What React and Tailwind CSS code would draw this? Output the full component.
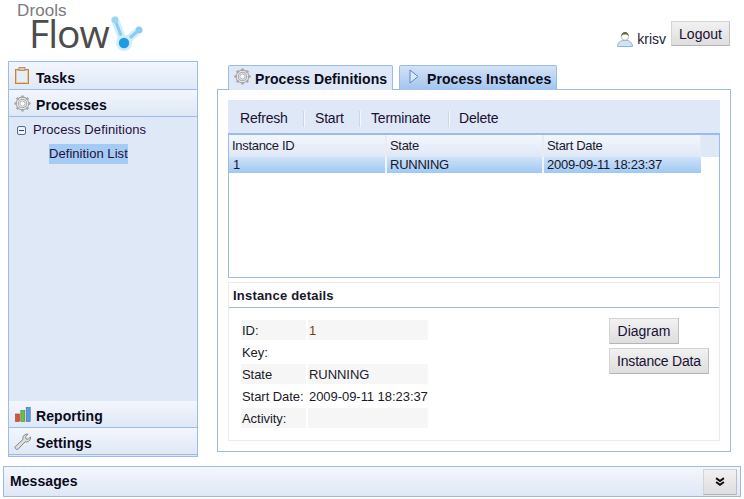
const Gear = ({ className }) => (
  <svg viewBox="0 0 20 20" className={className}>
    <circle cx="10" cy="10" r="6.3" fill="none" stroke="#a0a0a0" strokeWidth="3.6" />
    <circle cx="10" cy="10" r="6.3" fill="none" stroke="#e4e4e4" strokeWidth="1.8" />
    <g stroke="#a6a6a6" strokeWidth="3">
      <path d="M10 0.5v3M10 16.500v3M0.500 10h3M16.500 10h3M3.300 3.300l2.100 2.100M14.600 14.600l2.100 2.100M16.700 3.300l-2.100 2.100M5.400 14.600l-2.100 2.100" />
    </g>
    <circle cx="10" cy="10" r="3" fill="#fff" stroke="#aaa" strokeWidth="1" />
  </svg>
);

const Clipboard = () => (
  <svg viewBox="0 0 15 17" className="w-[15px] h-[17px]">
    <rect x="0.5" y="2.500" width="13" height="14" fill="#d9e8f7" stroke="#c08245" />
    <rect x="1.500" y="3.500" width="11" height="12" fill="#e3eefa" stroke="#edc79c" strokeWidth="1" />
    <rect x="4" y="0.5" width="6" height="3" fill="#e3c9a6" stroke="#a8865f" strokeWidth="0.8" />
  </svg>
);

const Bars = () => (
  <svg viewBox="0 0 16 15" className="w-[16px] h-[15px]">
    <rect x="0.5" y="7" width="4" height="7.500" fill="#e0503c" stroke="#9b3a2c" strokeWidth="0.6" />
    <rect x="5.800" y="3.500" width="4" height="11" fill="#6dbb4a" stroke="#3f8a2a" strokeWidth="0.6" />
    <rect x="11.200" y="0.5" width="4" height="14" fill="#5b9be0" stroke="#3a6ea8" strokeWidth="0.6" />
  </svg>
);

const Wrench = () => (
  <svg viewBox="0 0 17 17" className="w-[17px] h-[17px]">
    <path
      d="M1.200 13.600 9 6.400c-.6-2.200.6-4.600 3-5.200.8-.2 1.500-.1 2.100.1l-2.600 2.500.5 2 2 .5 2.500-2.400c.4 2.400-1 4.500-3.200 5-.8.2-1.500.1-2.200-.1l-7.300 7.600c-1 .8-3.400-1.400-2.600-2.800z"
      fill="#dedede"
      stroke="#7d7d7d"
      strokeWidth="0.9"
    />
  </svg>
);

const User = () => (
  <svg viewBox="0 0 16 16" className="w-[16px] h-[16px]">
    <path d="M.5 15.500c0-3.500 2.500-5.500 5-6h5c2.500.5 5 2.500 5 6z" fill="#cfe2f7" stroke="#8fb3dc" />
    <circle cx="8" cy="5.500" r="3.700" fill="#fff" stroke="#b89a78" strokeWidth="0.6" />
    <path d="M4.300 5.500C4.100 2.800 5.800 1 8 1s3.900 1.800 3.700 4.500C10.800 3.800 9.500 3.600 8 3.600s-2.800.2-3.700 1.900z" fill="#5f6b3c" />
  </svg>
);

const Logo = () => (
  <div className="relative w-[150px] h-[61px]">
    <span className="absolute left-[17px] top-[1px] text-[17px] leading-[19px] tracking-[0.1px] text-[#7b7b7b]">Drools</span>
    <span
      className="absolute left-[29px] top-[18px] text-[39px] leading-[30px] tracking-[-1px] text-[#4c4c4c]"
      style={{ fontFamily: '"Open Sans","Liberation Sans",sans-serif' }}
    >
      Flow
    </span>
    <svg viewBox="0 0 34 40" className="absolute left-[111px] top-[13px] w-[34px] h-[40px]">
      <path d="M4 7 13 30 28 17" fill="none" stroke="#d4eefb" strokeWidth="8" strokeLinecap="round" strokeLinejoin="round" />
      <path d="M4 7 13 30 28 17" fill="none" stroke="#86cdf1" strokeWidth="3" strokeLinecap="round" strokeLinejoin="round" />
      <circle cx="4" cy="7" r="3.200" fill="#9bd6f4" />
      <circle cx="28" cy="17" r="3.200" fill="#86cdf1" />
      <circle cx="13" cy="30" r="8" fill="#d2edfb" />
      <circle cx="13" cy="30" r="5.200" fill="#1d9be3" />
    </svg>
  </div>
);

const Btn = ({ children, className = "" }) => (
  <button className={`h-[26px] px-[8px] border border-[#d4d4d4] border-b-[#b4b4b4] border-r-[#c0c0c0] bg-gradient-to-b from-[#f1f1f1] to-[#dedede] text-[14px] text-[#1a1033] whitespace-nowrap ${className}`}>
    {children}
  </button>
);

const AccHead = ({ icon, label, pad, h = "h-[27px]" }) => (
  <div className={`${h} flex items-center gap-[5px] pl-[5px] bg-gradient-to-b from-[#f3f6fd] to-[#dfe8f6] border-b border-[#9dbbe8]`}>
    <span className="w-[17px] h-[18px] flex items-center justify-center shrink-0">{icon}</span>
    <span className={`text-[14px] font-bold tracking-[0.08px] text-[#0b0b1a] ${pad}`}>{label}</span>
  </div>
);

const DetailRow = ({ label, value, shaded }) => (
  <div className="flex gap-[2px] h-[20px] items-center text-[13px] leading-[21px] tracking-[-0.05px] text-[#1a1a2a]">
    <div className={`w-[65px] h-full pl-[1px] whitespace-nowrap ${shaded ? "bg-[#f6f6f6]" : ""}`}>{label}</div>
    <div className={`w-[120px] h-full pl-[1px] whitespace-nowrap ${shaded ? "bg-[#f6f6f6]" : ""}`}>{value}</div>
  </div>
);

const TB = ({ children, sep = true, className }) => (
  <div className="flex items-center">
    <span className={`text-[14px] tracking-[-0.2px] text-[#1a1033] ${className}`}>{children}</span>
    {sep && <span className="w-[2px] h-[16px] bg-[#cdd6e3] border-r border-[#f4f7fc]" />}
  </div>
);

export default function App() {
  return (
    <div className="w-[744px] h-[499px] bg-white flex flex-col overflow-hidden" style={{ fontFamily: '"Liberation Sans",Arial,sans-serif' }}>
      <header className="h-[61px] shrink-0 flex justify-between">
        <Logo />
        <div className="flex items-start pr-[14px] pt-[21px]">
          <div className="flex items-center gap-[4px] mr-[5px] mt-[10px]">
            <User />
            <span className="text-[14px] leading-[16px] text-[#1a1a3a]">krisv</span>
          </div>
          <Btn className="w-[59px] !h-[25px] !px-0 pt-[2px]">Logout</Btn>
        </div>
      </header>

      <div className="flex h-[396px] shrink-0">
        <aside className="ml-[8px] w-[190px] h-[396px] border border-[#9dbbe8] flex flex-col bg-[#dfe8f6]">
          <AccHead icon={<Clipboard />} label="Tasks" h="h-[28px]" pad="pt-[6px]" />
          <AccHead icon={<Gear className="w-[17px] h-[17px]" />} label="Processes" pad="pt-[4px]" />
          <div className="flex-1 bg-[#dfe8f6] pt-[1px]">
            <div className="flex items-center h-[24px] pl-[8px] text-[13px] tracking-[0.1px] text-[#24103c]">
              <span className="w-[9px] h-[9px] border border-[#5a6a8a] rounded-[2px] flex items-center justify-center bg-[#eef3fb] mr-[7px]">
                <span className="w-[5px] h-[1px] bg-[#33415c]" />
              </span>
              Process Definitions
            </div>
            <div className="pl-[40px] pt-[2px]">
              <span className="block w-[79px] h-[20px] leading-[20px] text-[13px] tracking-[0.05px] text-[#24103c] bg-[#a3cbf3] whitespace-nowrap">Definition List</span>
            </div>
          </div>
          <div className="pb-[1px]">
            <AccHead icon={<Bars />} label="Reporting" pad="pt-[4px]" />
            <AccHead icon={<Wrench />} label="Settings" pad="pt-[4px]" />
          </div>
        </aside>

        <main className="ml-[19px] w-[514px] flex flex-col">
          <div className="h-[29px] shrink-0 pl-[11px] flex items-end gap-[6px] relative z-10 -mb-[1px]">
            <div className="w-[165px] h-[25px] border border-b-0 border-[#9dbbe8] rounded-t-[2px] bg-[#dfe8f6] flex items-center pl-[5px] gap-[4px]">
              <Gear className="w-[17px] h-[17px] -translate-y-[2px]" />
              <span className="pt-[2px] text-[14px] font-bold tracking-[0.08px] text-[#0b0b1a] whitespace-nowrap">Process Definitions</span>
            </div>
            <div className="w-[158px] h-[25px] border border-b-0 border-[#9dbbe8] rounded-t-[2px] bg-gradient-to-b from-[#d3e2f6] to-[#a3c4ee] flex items-center pl-[9px] gap-[8px]">
              <svg viewBox="0 0 10 15" className="w-[10px] h-[15px] -translate-y-[2px]">
                <path d="M1 1l8 6.500-8 6.500z" fill="#dbe9fb" stroke="#5c85c8" strokeWidth="1" />
              </svg>
              <span className="pt-[2px] text-[14px] font-bold tracking-[0.08px] text-[#0b0b1a] whitespace-nowrap">Process Instances</span>
            </div>
          </div>
          <div className="h-[363px] shrink-0 w-[514px] border border-[#9dbbe8] bg-white px-[10px] pt-[10px]">
            <div className="h-[33px] flex items-center bg-[#dfe8f6] pt-[4px]">
              <TB className="w-[75px] pl-[12px]">Refresh</TB>
              <TB className="w-[54px] pl-[10px]">Start</TB>
              <TB className="w-[87px] pl-[10px]">Terminate</TB>
              <TB sep={false} className="pl-[9px]">Delete</TB>
            </div>
            <div className="h-[145px] border border-t-2 border-[#9dbbe8] bg-white">
              <div className="flex h-[22px] bg-gradient-to-b from-[#f3f6fd] to-[#dfe8f6] text-[13px] leading-[21px] tracking-[-0.3px] text-[#1a1a2a]">
                <div className="w-[158px] pl-[3px] border-r-2 border-[#e7ebf2]">Instance ID</div>
                <div className="w-[157px] pl-[3px] border-r-2 border-[#e7ebf2]">State</div>
                <div className="w-[157px] pl-[3px] border-r border-[#e7ebf2]">Start Date</div>
                <div className="flex-1 bg-[#dfe8f6]" />
              </div>
              <div className="flex w-[472px] h-[16px] bg-gradient-to-b from-[#cfe3f9] to-[#9ec8f2] text-[13px] leading-[16px] tracking-[-0.25px] text-[#16162a]">
                <div className="w-[158px] pl-[4px] border-r-2 border-[#eef4fc]">1</div>
                <div className="w-[157px] pl-[3px] border-r-2 border-[#eef4fc]">RUNNING</div>
                <div className="flex-1 pl-[3px]">2009-09-11 18:23:37</div>
              </div>
            </div>
            <div className="mt-[4px] h-[159px] border border-[#ebebeb] flex flex-col">
              <div className="h-[25px] shrink-0 border-b border-[#9dbbe8] pl-[4px] text-[13px] font-bold leading-[25px] tracking-[0.2px] text-[#17172a]">Instance details</div>
              <div className="flex-1 flex justify-between pr-[10px]">
                <div className="pl-[12px] pt-[12px] flex flex-col gap-[2px]">
                  <DetailRow label="ID:" value={<span className="text-[#7a3c10]">1</span>} shaded />
                  <DetailRow label="Key:" value="" />
                  <DetailRow label="State" value="RUNNING" shaded />
                  <DetailRow label="Start Date:" value="2009-09-11 18:23:37" />
                  <DetailRow label="Activity:" value="" shaded />
                </div>
                <div className="pt-[10px] flex flex-col items-start gap-[4px] w-[100px]">
                  <Btn className="w-[70px] !px-0">Diagram</Btn>
                  <Btn className="w-[100px] !px-0 tracking-[-0.2px]">Instance Data</Btn>
                </div>
              </div>
            </div>
          </div>
        </main>
      </div>

      <footer className="mt-[9px] mx-[3px] h-[31px] shrink-0 border border-[#9dbbe8] bg-gradient-to-b from-[#f3f6fd] to-[#dfe8f6] flex items-center justify-between pl-[6px] pr-[3px]">
        <span className="text-[14px] font-bold tracking-[0.08px] text-[#0b0b1a]">Messages</span>
        <div className="w-[34px] h-[26px] border border-[#d4d4d4] border-b-[#b4b4b4] border-r-[#c0c0c0] bg-gradient-to-b from-[#f1f1f1] to-[#dedede] flex items-center justify-center">
          <svg viewBox="0 0 9 8" className="w-[10px] h-[9px]">
            <path d="M1 1l3.500 2.500L8 1M1 4.500 4.500 7 8 4.500" fill="none" stroke="#111" strokeWidth="1.800" />
          </svg>
        </div>
      </footer>
    </div>
  );
}
